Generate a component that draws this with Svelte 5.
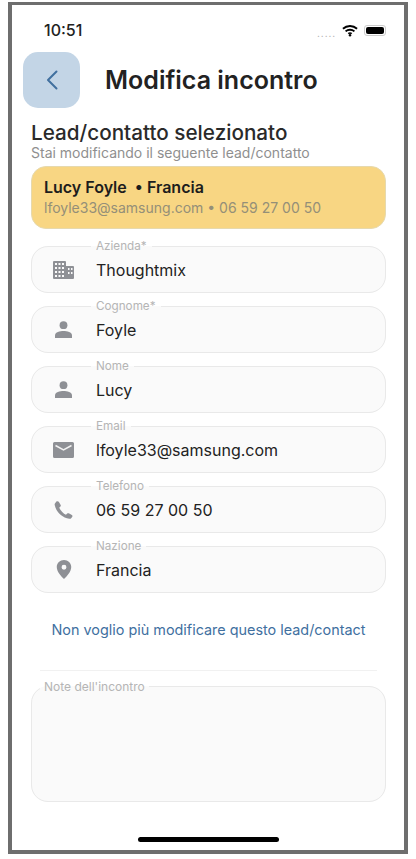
<script>
  const fields = [
    { label: 'Azienda*', value: 'Thoughtmix', icon: 'building' },
    { label: 'Cognome*', value: 'Foyle', icon: 'person' },
    { label: 'Nome', value: 'Lucy', icon: 'person' },
    { label: 'Email', value: 'lfoyle33@samsung.com', icon: 'mail' },
    { label: 'Telefono', value: '06 59 27 00 50', icon: 'phone' },
    { label: 'Nazione', value: 'Francia', icon: 'pin' }
  ];
</script>

<div class="page">
  <div class="frame">
    <div class="status">
      <span class="time">10:51</span>
      <div class="status-icons">
        <span class="dots">.....</span>
        <svg width="16" height="13" viewBox="0 0 17 13" fill="none" stroke="#000" stroke-width="2" stroke-linecap="butt">
          <path d="M1 4.600C5.200.7 11.800.7 16 4.600" />
          <path d="M3.800 7.400c2.600-2.300 6.800-2.300 9.400 0" />
          <path d="M6.600 9.900c1-.8 2.800-.8 3.800 0" stroke-width="1.600" />
          <circle cx="8.500" cy="11.600" r="1.300" fill="#000" stroke="none" />
        </svg>
        <span class="battery"><span class="battery-fill"></span></span>
      </div>
    </div>

    <header class="head">
      <button class="back" aria-label="Indietro">
        <svg width="14" height="22" viewBox="0 0 14 22" fill="none" stroke="#41709f" stroke-width="2" stroke-linecap="round" stroke-linejoin="round">
          <path d="M11.500 2.500 3 11l8.500 8.500" />
        </svg>
      </button>
      <h1>Modifica incontro</h1>
    </header>

    <section class="lead">
      <h2>Lead/contatto selezionato</h2>
      <p>Stai modificando il seguente lead/contatto</p>
      <div class="card">
        <div class="card-title">Lucy Foyle&nbsp; • Francia</div>
        <div class="card-sub">lfoyle33@samsung.com • 06 59 27 00 50</div>
      </div>
    </section>

    <div class="fields">
      {#each fields as f}
        <fieldset class="field">
          <legend>{f.label}</legend>
          <div class="row">
            <span class="icon">
              {#if f.icon === 'building'}
                <svg width="21" height="18" viewBox="0 0 21 18">
                  <path fill="#8e9095" fill-rule="evenodd" d="M1 0h11a1 1 0 0 1 1 1v4h7a1 1 0 0 1 1 1v11a1 1 0 0 1-1 1H1a1 1 0 0 1-1-1V1a1 1 0 0 1 1-1zM2 2v2h2V2zm3.500 0v2h2V2zM9 2v2h2V2zM2 6v2h2V6zm3.500 0v2h2V6zM9 6v2h2V6zM2 10v2h2v-2zm3.500 0v2h2v-2zM9 10v2h2v-2zM2 14v2h2v-2zm3.500 0v2h2v-2zM9 14v2h2v-2zm6-7v2h1.500V7zm3 0v2h1.500V7zm-3 4v2h1.500v-2zm3 0v2h1.500v-2z" />
                </svg>
              {:else if f.icon === 'person'}
                <svg width="17" height="17" viewBox="0 0 17 17">
                  <circle cx="8.500" cy="4.200" r="3.900" fill="#8e9095" />
                  <path fill="#8e9095" d="M0 14.200c0-3 5-4.200 8.500-4.200s8.500 1.200 8.500 4.200V17H0z" />
                </svg>
              {:else if f.icon === 'mail'}
                <svg width="21" height="16" viewBox="0 0 21 16">
                  <path fill="#8e9095" d="M1.500 0h18A1.500 1.500 0 0 1 21 1.500v13a1.500 1.500 0 0 1-1.500 1.500h-18A1.500 1.500 0 0 1 0 14.500v-13A1.500 1.500 0 0 1 1.500 0z" />
                  <path fill="none" stroke="#f2f2f2" stroke-width="1.500" d="M2.500 3.500 10.500 8l8-4.500" />
                </svg>
              {:else if f.icon === 'phone'}
                <svg width="19" height="18" viewBox="0 0 19 19">
                  <path fill="#8e9095" d="M2 .6.800 2.100C.2 2.700 0 3.400.2 4.200 1.600 11.300 7.600 17.400 15.600 18.800c.9.100 1.700-.2 2.200-.9l1-1.300c.4-.7.200-1.500-.5-1.900l-3.200-1.700c-.6-.3-1.200-.2-1.700.3l-1.300 1.300C9.500 13.400 6.400 10.100 5 7.200l1.300-1.400c.4-.5.500-1.100.2-1.700L4.700 1C4.200.1 2.800-.2 2 .6z" />
                </svg>
              {:else}
                <svg width="16" height="19" viewBox="0 0 16 21">
                  <path fill="#8e9095" fill-rule="evenodd" d="M8 0c4.400 0 8 3.400 8 7.800C16 13.200 10.500 18.800 8 21 5.500 18.800 0 13.200 0 7.800 0 3.400 3.600 0 8 0zm0 5.300a2.700 2.700 0 1 0 0 5.400 2.700 2.700 0 0 0 0-5.400z" />
                </svg>
              {/if}
            </span>
            <span class="value">{f.value}</span>
          </div>
        </fieldset>
      {/each}
    </div>

    <a class="link" href="#top">Non voglio più modificare questo lead/contact</a>
    <hr />

    <fieldset class="notes">
      <legend>Note dell'incontro</legend>
    </fieldset>

    <div class="home-wrap"><span class="home"></span></div>
  </div>
</div>

<style>
  :global(body) {
    margin: 0;
    background: #fff;
  }
  .page {
    width: 416px;
    height: 859px;
    padding: 2px 0 0 8px;
    box-sizing: border-box;
    font-family: Inter, "Liberation Sans", sans-serif;
    overflow: hidden;
  }
  .frame {
    width: 400px;
    height: 852px;
    box-sizing: border-box;
    border: 4px solid #6e6e6e;
    border-top-width: 3px;
    background: #fff;
    display: flex;
    flex-direction: column;
    padding: 0 18px 0 19px;
  }
  .status {
    height: 27px;
    margin-top: 11px;
    display: flex;
    align-items: center;
    justify-content: space-between;
    padding: 0 0 0 13px;
  }
  .time {
    font-size: 16px;
    font-weight: 500;
    color: #222;
  }
  .status-icons {
    display: flex;
    align-items: center;
    gap: 6px;
    margin-top: 2px;
  }
  .dots {
    font-size: 10px;
    line-height: 10px;
    color: #aaa;
    letter-spacing: 0.9px;
    margin-top: 4px;
  }
  .battery {
    width: 22px;
    height: 11px;
    border: 1px solid #ccc;
    border-radius: 3px;
    box-sizing: border-box;
    padding: 1px;
    display: block;
  }
  .battery-fill {
    display: block;
    height: 100%;
    background: #000;
    border-radius: 2px;
  }
  .head {
    display: flex;
    align-items: center;
    gap: 25px;
    margin: 9px 0 0 -8px;
  }
  .back {
    width: 57px;
    height: 56px;
    border: 0;
    border-radius: 15px;
    background: #c3d5e6;
    padding: 0;
    display: flex;
    align-items: center;
    justify-content: center;
  }
  h1 {
    margin: 0;
    font-size: 25px;
    font-weight: 600;
    color: #222;
    line-height: 28px;
  }
  .lead {
    margin-top: 14px;
  }
  h2 {
    margin: 0;
    font-size: 20.700px;
    line-height: 22px;
    font-weight: 500;
    color: #2a2a2a;
  }
  .lead p {
    margin: 0;
    font-size: 14px;
    line-height: 18px;
    color: #8f8f8f;
  }
  .card {
    margin-top: 4px;
    height: 63px;
    box-sizing: border-box;
    border: 1px solid #e6d9ae;
    border-radius: 15px;
    background: #f8d683;
    padding: 10px 12px;
  }
  .card-title {
    font-size: 16px;
    line-height: 20px;
    font-weight: 600;
    color: #1d1d1d;
  }
  .card-sub {
    font-size: 14px;
    line-height: 20px;
    color: #948f78;
    margin-top: 1px;
  }
  .fields {
    display: flex;
    flex-direction: column;
    gap: 7.100px;
    margin-top: 11px;
  }
  fieldset {
    margin: 0;
    box-sizing: border-box;
    border: 1px solid #e9e9e9;
    background: #fafafa;
    min-width: 0;
  }
  legend {
    font-size: 11.700px;
    line-height: 13px;
    color: #b5b5b5;
    padding: 0 5px;
  }
  .field {
    height: 53px;
    border-radius: 17px;
    padding: 0 0 6px 21px;
  }
  .field legend {
    margin-left: 38px;
  }
  .row {
    height: 33px;
    display: flex;
    align-items: center;
  }
  .icon {
    width: 21px;
    display: flex;
    justify-content: center;
    flex: none;
    margin-right: 22px;
  }
  .value {
    font-size: 16px;
    color: #222;
  }
  .link {
    margin-top: 27.500px;
    text-align: center;
    font-size: 14.400px;
    line-height: 18px;
    font-weight: 400;
    color: #41709f;
    text-decoration: none;
  }
  hr {
    margin: 31px 9px 0;
    border: 0;
    border-top: 1px solid #f1f1f1;
  }
  .notes {
    margin-top: 9px;
    height: 122px;
    border-radius: 17px;
    padding: 0 0 0 8px;
  }
  .notes legend {
    font-size: 12px;
    padding: 0 4px;
  }
  .home-wrap {
    margin-top: auto;
    height: 13px;
    display: flex;
    justify-content: center;
  }
  .home {
    display: block;
    width: 141px;
    height: 5px;
    border-radius: 3px;
    background: #000;
  }
</style>
